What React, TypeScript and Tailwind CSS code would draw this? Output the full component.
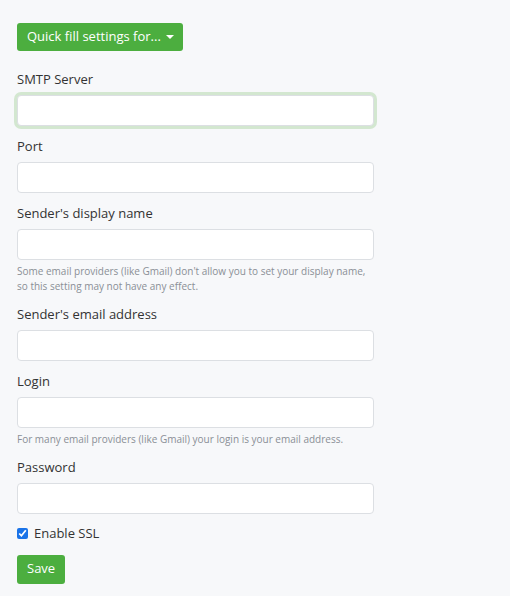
import { useState } from 'react'

const inputCls =
  'block w-[357px] h-[31px] px-2 bg-white border border-[#dcdfe3] rounded-[4px] text-[13px] text-[#333] outline-none'

function Field({ label, help, focused }: { label: string; help?: string; focused?: boolean }) {
  return (
    <div className="mb-[10px]">
      <label className="block text-[13px] leading-[21px] text-[#333] mb-[5px]">{label}</label>
      <input
        type="text"
        autoFocus={focused}
        className={
          focused
            ? inputCls + ' ring-[3px] ring-[#d3e7d0] border-[#c8e0c4]'
            : inputCls
        }
      />
      {help && (
        <p className="mt-[4px] w-[360px] text-[10px] leading-[15px] text-[#8a8f96]">{help}</p>
      )}
    </div>
  )
}

export default function App() {
  const [ssl, setSsl] = useState(true)

  return (
    <div className="min-h-[596px] bg-[#f7f8fa] px-[17px] pt-[23px] font-['Open_Sans',sans-serif]">
      <button className="h-[28px] pl-[10px] pr-[9px] mb-[18px] flex items-center gap-[5px] bg-[#4cae3f] text-white text-[13px] rounded-[3px]">
        Quick fill settings for...
        <span className="w-0 h-0 border-x-[4px] border-x-transparent border-t-[4px] border-t-white" />
      </button>

      <Field label="SMTP Server" focused />
      <Field label="Port" />
      <Field
        label="Sender's display name"
        help="Some email providers (like Gmail) don't allow you to set your display name, so this setting may not have any effect."
      />
      <Field label="Sender's email address" />
      <Field
        label="Login"
        help="For many email providers (like Gmail) your login is your email address."
      />
      <Field label="Password" />

      <label className="flex items-center gap-[6px] text-[13px] text-[#333] mt-[10px]">
        <input
          type="checkbox"
          checked={ssl}
          onChange={(e) => setSsl(e.target.checked)}
          className="w-[11px] h-[11px] accent-[#1a73e8]"
        />
        Enable SSL
      </label>

      <button className="mt-[11px] h-[29px] px-[10px] bg-[#4cae3f] text-white text-[13px] rounded-[3px]">
        Save
      </button>
    </div>
  )
}
